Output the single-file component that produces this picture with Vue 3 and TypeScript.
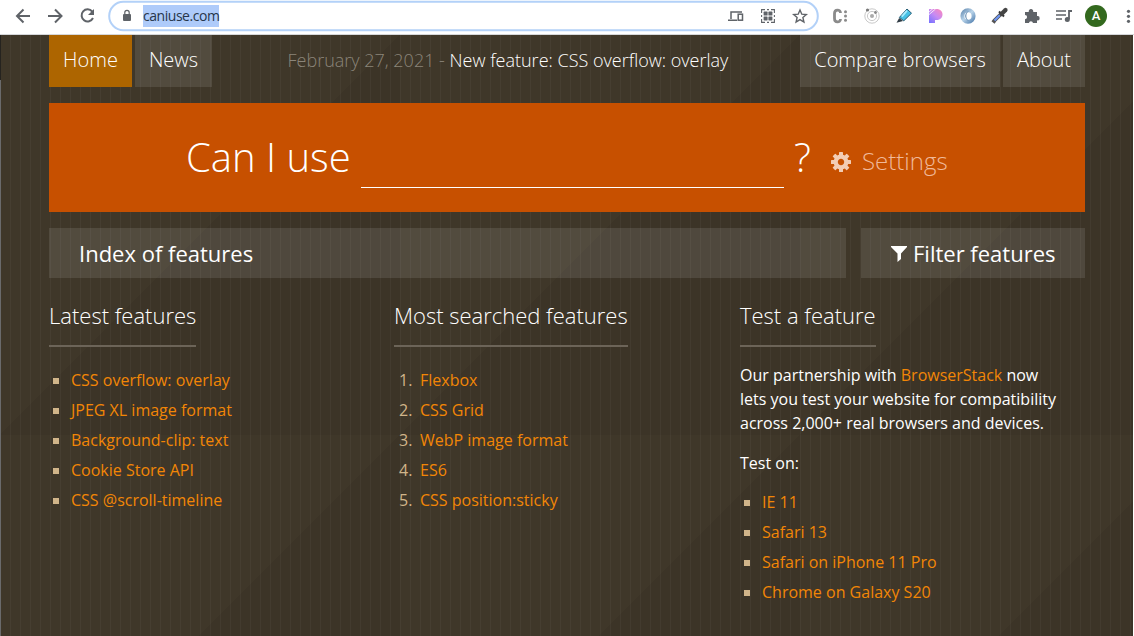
<script setup lang="ts">
const latest: string[] = ['CSS overflow: overlay', 'JPEG XL image format', 'Background-clip: text', 'Cookie Store API', 'CSS @scroll-timeline']
const searched: string[] = ['Flexbox', 'CSS Grid', 'WebP image format', 'ES6', 'CSS position:sticky']
const devices: string[] = ['IE 11', 'Safari 13', 'Safari on iPhone 11 Pro', 'Chrome on Galaxy S20']
const teeth: number[] = [0, 45, 90, 135, 180, 225, 270, 315]
</script>

<template>
  <div class="window">
    <header class="toolbar">
      <svg class="chrome-icons" width="1134" height="34" viewBox="0 0 1134 34" fill="none">
        <g stroke="#5f6368" stroke-width="2">
          <path d="M30 16H17.5M23.5 9.5L17 16L23.5 22.5" />
          <path d="M48 16H61M55 9.5L61.5 16L55 22.5" />
          <path d="M92.2 11.5A6 6 0 1 0 93 18" />
        </g>
        <path d="M94 9V15H88Z" fill="#5f6368" />
        <rect x="109.2" y="1.8" width="708.6" height="28.4" rx="14.2" fill="#fff" stroke="#b3d1f8" stroke-width="2" />
        <rect x="123" y="14" width="8" height="7" rx="1" fill="#5f6368" />
        <path d="M124.8 14V12.6a2.2 2.2 0 0 1 4.4 0V14" stroke="#5f6368" stroke-width="1.2" />
        <g stroke="#5f6368" stroke-width="1.5">
          <path d="M731 19V12H742M728 20.2H737" />
          <rect x="738.2" y="14.2" width="4.3" height="6" />
          <path d="M761.6 13V9.6H765M771 9.6H774.4V13M774.4 19V22.4H771M765 22.4H761.6V19M767 9.6H769M767 22.4H769M761.6 15V17M774.4 15V17" stroke-width="1.1" />
        </g>
        <g fill="#5f6368"><rect x="763.6" y="11.6" width="4" height="4" rx=".6"/><rect x="768.4" y="11.6" width="4" height="4" rx=".6"/><rect x="763.6" y="16.4" width="4" height="4" rx=".6"/><rect x="768.4" y="16.4" width="4" height="4" rx=".6"/></g>
        <path d="M800 10L801.8 14.2L806.3 14.6L802.9 17.5L803.9 22L800 19.6L796.1 22L797.1 17.5L793.7 14.6L798.2 14.2Z" stroke="#5f6368" stroke-width="1.4" />
        <path d="M840.5 13C840.5 9 834.5 9 834.5 13.5V18.5C834.5 23 840.5 23 840.5 19" stroke="#8b8b8b" stroke-width="2.8" />
        <g fill="#8b8b8b"><circle cx="845.5" cy="11.8" r="1.5"/><circle cx="845.5" cy="16" r="1.5"/><circle cx="845.5" cy="20.2" r="1.5"/></g>
        <circle cx="872" cy="16" r="7.2" stroke="#c9c9c9" />
        <circle cx="872" cy="16" r="4.6" stroke="#c9c9c9" />
        <circle cx="872" cy="16" r="2" fill="#aaa" /><circle cx="867.5" cy="10" r="1.6" fill="#777" /><circle cx="875.5" cy="12.5" r="1.4" fill="#888" />
        <path d="M907 9L911.5 13.2L903.8 20.8L899.4 17.4Z" fill="#47c1e5" stroke="#255b73" stroke-width="1" />
        <path d="M907 10.6L901.8 16.6" stroke="#a9edff" stroke-width="1.8" />
        <path d="M899.2 18L903 21L896.5 22.8Z" fill="#303c45" />
        <defs>
          <linearGradient id="pGrad" x1="942" y1="9" x2="930" y2="23" gradientUnits="userSpaceOnUse"><stop stop-color="#ff87b9" /><stop offset=".5" stop-color="#c68bf4" /><stop offset="1" stop-color="#7773ff" /></linearGradient>
          <linearGradient id="ringGrad" x1="961" y1="9" x2="974" y2="23" gradientUnits="userSpaceOnUse"><stop stop-color="#5e85ad" /><stop offset=".5" stop-color="#b8d3e9" /><stop offset="1" stop-color="#4d7cad" /></linearGradient>
        </defs>
        <path d="M929 9H936.5C944.5 9 944.5 20 936.5 20H935V23H929Z" fill="url(#pGrad)" />
        <path d="M928.5 12.5L933 8.5M928.5 15L935.5 9" stroke="#fff" stroke-width=".8" />
        <ellipse cx="968" cy="16" rx="5.6" ry="5.8" stroke="url(#ringGrad)" stroke-width="4" />
        <path d="M968 11.5C965 14 965 18 968 20.5" stroke="#557fa9" />
        <path d="M1001 14L994.5 20.5L993 22.5" stroke="#555" stroke-width="3.8" /><path d="M1000 15L994.5 20.5" stroke="#6f96f2" stroke-width="2.2" />
        <path d="M999 11.5L1004 16.5" stroke="#333" stroke-width="2" /><path d="M1001.5 14L1005.5 10" stroke="#444" stroke-width="4.2" stroke-linecap="round" />
        <path d="M1025 12h3.8a2.3 2.3 0 1 1 4.4 0H1037v4a2.2 2.2 0 1 1 0 4.3V23h-4a2.1 2.1 0 0 0-4.1 0H1025v-3.8a2.1 2.1 0 0 0 0-4.2Z" fill="#5f6368" />
        <path d="M1056 11H1066M1056 15H1066M1056 19H1062" stroke="#5f6368" stroke-width="1.7" />
        <path d="M1069 19V11H1072" stroke="#5f6368" stroke-width="1.8" /><circle cx="1067.3" cy="19.5" r="2.5" fill="#5f6368" />
        <circle cx="1096" cy="16" r="11" fill="#33691e" />
        <g fill="#5f6368"><circle cx="1128.5" cy="11.3" r="1.6"/><circle cx="1128.5" cy="16.3" r="1.6"/><circle cx="1128.5" cy="21.3" r="1.6"/></g>
      </svg>
      <span class="url">caniuse.com</span>
      <span class="avatar">A</span>
    </header>
    <main class="page">
      <nav class="nav">
        <a class="tab home">Home</a>
        <a class="tab news">News</a>
        <p class="notice">February 27, 2021 - <a>New feature: CSS overflow: overlay</a></p>
        <a class="tab compare">Compare browsers</a>
        <a class="tab about">About</a>
      </nav>
      <section class="hero">
        <span class="can">Can I use</span>
        <span class="field"></span>
        <span class="mark">?</span>
        <svg class="gear" width="20" height="20" viewBox="-10 -10 20 20">
          <rect v-for="a in teeth" :key="a" x="-2" y="-10" width="4" height="5" rx=".6" :transform="`rotate(${a})`" fill="#f3cdb4" />
          <circle r="5.3" fill="none" stroke="#f3cdb4" stroke-width="4.2" />
        </svg>
        <span class="settings">Settings</span>
      </section>
      <section class="bars">
        <div class="bar index">Index of features</div>
        <div class="bar filter">
          <svg class="funnel" width="16" height="16" viewBox="0 0 16 16"><path d="M0 0H16V1L10 7.5V13L6.5 16V7.5L0 1Z" fill="#fff" /></svg>
          <span>Filter features</span>
        </div>
      </section>
      <section class="columns">
        <div class="col">
          <h2>Latest features</h2>
          <ul class="list"><li v-for="t in latest" :key="t"><i class="square"></i><a>{{ t }}</a></li></ul>
        </div>
        <div class="col">
          <h2>Most searched features</h2>
          <ol class="list numbered"><li v-for="(t, i) in searched" :key="t"><span class="num">{{ i + 1 }}.</span><a>{{ t }}</a></li></ol>
        </div>
        <div class="col">
          <h2>Test a feature</h2>
          <p class="copy">Our partnership with <a>BrowserStack</a> now<br />lets you test your website for compatibility<br />across 2,000+ real browsers and devices.</p>
          <p class="on">Test on:</p>
          <ul class="list devices"><li v-for="t in devices" :key="t"><i class="square"></i><a>{{ t }}</a></li></ul>
        </div>
      </section>
    </main>
  </div>
</template>

<style>
body { margin: 0; overflow: hidden; }
</style>

<style scoped>
.window { width: 1134px; height: 636px; overflow: hidden; font-family: "Open Sans", sans-serif; color: #fff; background: #fff; }
.toolbar { position: relative; box-sizing: border-box; height: 35px; background: #fff; border-bottom: 1px solid #d5d7da; }
.chrome-icons { display: block; }
.url { position: absolute; left: 143px; top: 5px; width: 76px; height: 22px; line-height: 22px; font-size: 14px; letter-spacing: -.46px; color: #27364a; background: #aecbfa; }
.avatar { position: absolute; left: 1085px; top: 5px; width: 22px; line-height: 22px; text-align: center; font: 500 13px/22px Roboto, sans-serif; }
.page {
  box-sizing: border-box; width: 1133px; height: 601px; padding: 0 48px 0 49px;
  background:
    linear-gradient(#25231f, #25231f) 0 0 / 1px 45px no-repeat,
    linear-gradient(#6a6a6b, #6a6a6b) 0 45px / 1px 556px no-repeat,
    linear-gradient(90deg, rgba(255,255,255,.035) 1px, transparent 1px) 0 0 / 10px 10px,
    linear-gradient(135deg, #3f3729 0%, #3f3729 50%, #3c3427 50%, #3c3427 100%) 0 0 / 400px 400px;
}
.nav { display: flex; height: 52px; }
.tab { box-sizing: border-box; height: 52px; line-height: 50px; text-align: center; font-size: 20px; font-weight: 300; background: rgba(255,255,255,.1); white-space: nowrap; }
.home { width: 83px; background: #ad6500; }
.news { width: 77px; margin-left: 3px; }
.notice { margin: 0; width: 588px; padding-left: 75.5px; box-sizing: border-box; line-height: 51px; font-size: 18px; font-weight: 300; color: #8b8579; white-space: nowrap; }
.notice a { color: #fff; }
.compare { width: 200px; }
.about { width: 82px; margin-left: 3px; }
.hero { display: flex; height: 109px; margin-top: 16px; background: #c75000; font-weight: 300; white-space: nowrap; }
.can { width: 175px; padding-left: 137px; font-size: 40px; line-height: 108px; }
.field { width: 423px; height: 84px; border-bottom: 1px solid #fff; }
.mark { width: 37px; padding-left: 10px; font-size: 40px; line-height: 108px; }
.gear { margin-top: 49px; }
.settings { margin-left: 11px; font-size: 24px; line-height: 116px; color: #f0b999; }
.bars { display: flex; gap: 15px; margin-top: 16px; }
.bar { box-sizing: border-box; height: 50px; line-height: 51px; font-size: 22px; background: rgba(255,255,255,.1); white-space: nowrap; }
.index { width: 797px; padding-left: 30px; }
.filter { width: 224px; display: flex; align-items: center; padding-left: 30px; gap: 6px; }
.funnel { margin-top: 2px; }
.columns { display: grid; grid-template-columns: 345px 346px 345px; padding-top: 19px; }
h2 { width: fit-content; box-sizing: border-box; height: 50px; margin: 0; border-bottom: 2px solid #6c6458; font-size: 22px; line-height: 37px; font-weight: 300; white-space: nowrap; }
.list { list-style: none; margin: 18px 0 0; padding: 0; font-size: 16px; line-height: 30px; white-space: nowrap; }
.list li { display: flex; align-items: center; height: 30px; }
.list a, .copy a { color: #f28606; }
.square { width: 6px; height: 6px; margin: 2px 12px 0 4px; background: #d1b58a; }
.num { width: 26px; padding-left: 5px; box-sizing: border-box; color: #d1b58a; }
.copy { margin: 16px 0 0; font-size: 16px; line-height: 24px; white-space: nowrap; }
.on { margin: 16px 0 0; font-size: 16px; line-height: 24px; }
.devices { margin-top: 12px; }
</style>
